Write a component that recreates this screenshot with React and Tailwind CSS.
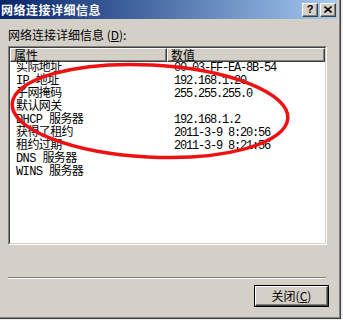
const rows = [
  ['实际地址', '00-03-FF-EA-8B-54'],
  ['IP 地址', '192.168.1.20'],
  ['子网掩码', '255.255.255.0'],
  ['默认网关', ''],
  ['DHCP 服务器', '192.168.1.2'],
  ['获得了租约', '2011-3-9 8:20:56'],
  ['租约过期', '2011-3-9 8:21:56'],
  ['DNS 服务器', ''],
  ['WINS 服务器', ''],
]

function CaptionButton({ children }) {
  return (
    <div className="w-[16px] h-[14px] bg-[#d4d0c8] border border-t-white border-l-white border-r-[#404040] border-b-[#404040] shadow-[inset_-1px_-1px_#808080] flex items-center justify-center text-black">
      {children}
    </div>
  )
}

function HeaderCell({ label, width }) {
  return (
    <div
      className={`${width} h-[14px] bg-[#d4d0c8] border border-t-white border-l-white border-r-[#404040] border-b-[#404040] shadow-[inset_-1px_-1px_#808080] pl-[3px] text-[12px] leading-[12px] text-black`}
    >
      {label}
    </div>
  )
}

export default function App() {
  return (
    <div className="w-[343px] h-[320px] bg-[#ececec] overflow-hidden relative font-['Noto_Sans_CJK_SC',sans-serif]">
      <div className="w-[341px] h-[319px] bg-[#d4d0c8] border-r border-b border-[#404040] shadow-[inset_-1px_-1px_#808080] pr-[3px] flex flex-col">
        {/* title bar */}
        <div className="h-[19px] bg-linear-to-r from-[#0a246a] to-[#a6caf0] flex items-center justify-between pr-[1px]">
          <span className="pl-[1px] text-white font-bold text-[12px] leading-[14px] tracking-[0.5px]">网络连接详细信息</span>
          <div className="flex gap-[2px]">
            <CaptionButton>
              <span className="text-[11px] leading-[11px] font-bold font-['Liberation_Sans',sans-serif]">?</span>
            </CaptionButton>
            <CaptionButton>
              <svg width="8" height="7" viewBox="0 0 8 7">
                <path d="M0.5 0.5 L7.5 6.5 M7.5 0.5 L0.5 6.5" stroke="#000" strokeWidth="1.6" />
              </svg>
            </CaptionButton>
          </div>
        </div>

        <div className="flex flex-col px-[8px] pt-[9px]">
          <div className="h-[14px] text-[12px] leading-[14px] text-black">
            网络连接详细信息 (<span className="underline">D</span>):
          </div>

          {/* list box */}
          <div className="mt-[4px] w-[319px] h-[199px] border border-t-[#808080] border-l-[#808080] border-r-white border-b-white">
            <div className="w-full h-full border border-t-[#404040] border-l-[#404040] border-r-[#d4d0c8] border-b-[#d4d0c8] bg-white flex flex-col">
              <div className="flex">
                <HeaderCell label="属性" width="w-[157px]" />
                <HeaderCell label="数值" width="w-[158px]" />
              </div>
              {rows.map(([k, v]) => (
                <div key={k} className="flex h-[13px] text-[12px] leading-[13px] text-black">
                  <div className="w-[157px] pl-[6px] whitespace-nowrap font-['Liberation_Mono','Noto_Sans_CJK_SC',monospace] tracking-[-0.6px]">{k}</div>
                  <div className="w-[158px] pl-[7px] whitespace-nowrap font-['Liberation_Mono',monospace] tracking-[-1.2px]">{v}</div>
                </div>
              ))}
            </div>
          </div>

          {/* separator */}
          <div className="mt-[32px] w-[318px] border-t border-t-[#808080] border-b border-b-white" />

          <div className="flex justify-end mt-[6px]">
            <div className="w-[75px] h-[22px] border border-black">
              <div className="w-full h-full border border-t-white border-l-white border-r-[#404040] border-b-[#404040] shadow-[inset_-1px_-1px_#808080] flex items-center justify-center text-[12px] leading-[12px] text-black">
                关闭(<span className="underline">C</span>)
              </div>
            </div>
          </div>
        </div>
      </div>

      {/* red annotation ellipse */}
      <svg className="absolute left-0 top-0 pointer-events-none" width="343" height="320" viewBox="0 0 343 320">
        <ellipse cx="150" cy="111" rx="138" ry="46" transform="rotate(3 150 111)" fill="none" stroke="#ee1111" strokeWidth="3.5" />
      </svg>
    </div>
  )
}
